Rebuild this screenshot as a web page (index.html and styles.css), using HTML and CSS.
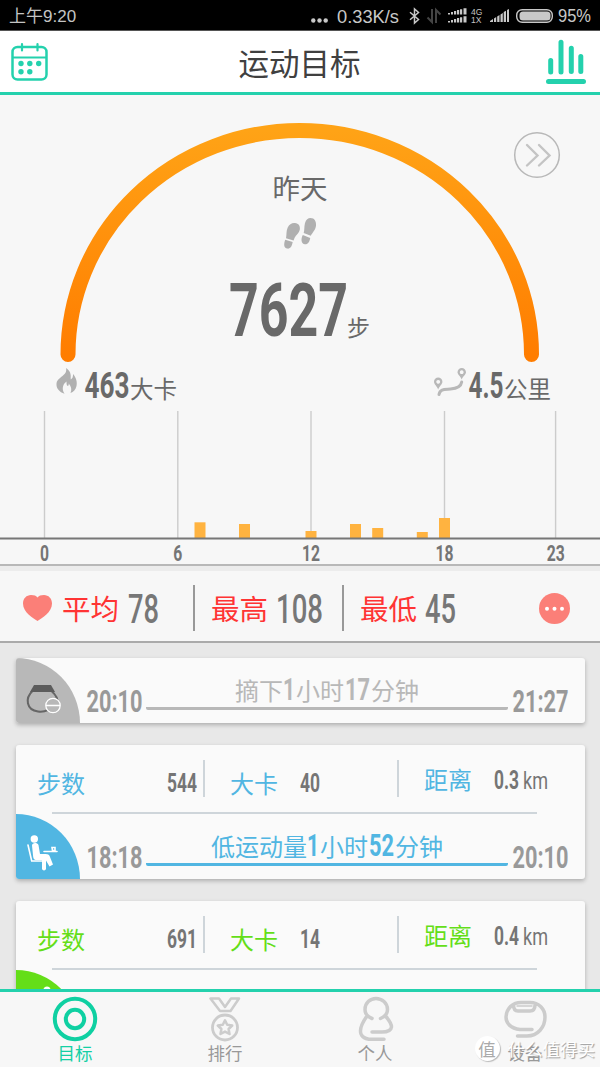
FILE: index.html
```html
<!DOCTYPE html>
<html lang="zh-CN">

<head>
    <meta charset="UTF-8">
    <meta name="viewport" content="width=device-width, initial-scale=1.0">
    <title>运动目标</title>
    <link rel="stylesheet" href="styles.css">
</head>

<body>
    <!-- Status bar -->
    <div class="status-bar">
        <span class="clock">上午9:20</span>
        <div class="status-right">
            <svg class="dots" width="17" height="5" viewBox="0 0 17 5"><circle cx="2.3" cy="2.5" r="2.2"/><circle cx="8.5" cy="2.5" r="2.2"/><circle cx="14.7" cy="2.5" r="2.2"/></svg>
            <svg class="speed" width="63" height="14"><text x="0" y="14" font-size="18.5" textLength="62" lengthAdjust="spacingAndGlyphs">0.33K/s</text></svg>
            <svg class="bluetooth" width="11" height="16" viewBox="0 0 11 16"><path d="M1 4.2L9.5 11.5L5.5 15V1L9.5 4.5L1 11.8"/></svg>
            <svg class="arrows" width="14" height="14" viewBox="0 0 14 14"><path d="M5 0V13L0.5 8.5M9 14V1L13.5 5.5"/></svg>
            <svg class="dual" width="19" height="15" viewBox="0 0 19 15"><path d="M0 5h2v1.500H0zM3 4h2v2.500H3zM6 3h2.200v3.500H6zM9 2h2.200v4.500H9zM12 1.200h2.200v5.300H12zM15.500 .3h3v6.200h-3zM0 13h2v1.500H0zM3 12h2v2.500H3zM6 11h2.200v3.500H6zM9 10h2.200v4.500H9zM12 9.200h2.200v5.300H12zM15.500 8.300h3v6.200h-3z"/></svg>
            <span class="net">4G<br>1X</span>
            <svg class="signal" width="19" height="13" viewBox="0 0 19 13"><path d="M0 12L3 10V13H0zM4 9.500L6.200 8V13H4zM7.200 7.500L9.500 6V13h-2.300zM10.500 5.500L12.800 4V13h-2.300zM13.700 3L16 1.800V13h-2.300zM17 1L19 0V13h-2z"/></svg>
            <svg class="battery" width="37" height="14" viewBox="0 0 37 14"><rect x=".7" y=".7" width="35.600" height="12.600" rx="5.500"/><rect class="level" x="3.500" y="2.500" width="31" height="9" rx="3.500"/></svg>
            <svg class="percent" width="33" height="13"><text x="0" y="13" font-size="17.500" textLength="33" lengthAdjust="spacingAndGlyphs">95%</text></svg>
        </div>
    </div>

    <!-- Title -->
    <header class="header">
        <svg class="calendar" width="38" height="40" viewBox="0 0 38 40">
            <rect x="2.500" y="5" width="34" height="32.500" rx="5"/>
            <path d="M3 15.500H36M12 2V8.500M27.500 2V8.500"/>
            <g class="day"><circle cx="11" cy="21.500" r="2.700"/><circle cx="19.800" cy="21.500" r="2.700"/><circle cx="28.700" cy="21.500" r="2.700"/><circle cx="11" cy="29.700" r="2.700"/><circle cx="19.800" cy="29.700" r="2.700"/></g>
        </svg>
        <h1>运动目标</h1>
        <svg class="stats-icon" width="40" height="46" viewBox="0 0 40 46"><path d="M4.700 21.500V33M15 3.200V33M25.300 9.200V32.500M34.800 17.500V32.500M2.500 42.500H37.500"/></svg>
    </header>

    <!-- Daily goal -->
    <section class="goal">
        <svg class="arc" width="600" height="275" viewBox="0 95 600 275">
            <defs>
                <linearGradient id="arcFill" x1="0" y1="0" x2="0" y2="1">
                    <stop offset="0" stop-color="#ffa316"/>
                    <stop offset="1" stop-color="#ff7d00"/>
                </linearGradient>
            </defs>
            <path d="M68 354.500A231.750 224 0 0 1 531.500 354.500" stroke="url(#arcFill)"/>
        </svg>
        <div class="today">
            <p class="day-name">昨天</p>
            <svg class="feet" width="36" height="34" viewBox="0 0 36 34">
                <path d="M13 6C16.500 6.300 18.500 9 17.800 12.800C17.200 16 14 18 12.600 20.800L11.600 23.400L4 21.200C4.800 17.500 4 14.500 5.700 10.500C7.300 7.200 10 5.600 13 6zM3.200 22.700L10.700 25C10 29 8.600 32 5.300 31.600C1.600 31 1.700 27 3.200 22.700z"/>
                <path d="M28.500 1C32.500 1 34.500 4.500 34 8.700C33.500 13 30.500 15.300 28.800 18.800L21.700 16C22.700 12.500 22 10 23 6C24 2.500 26 1 28.500 1zM20.800 18L28.200 21C27.500 25 26 27.500 23 27.300C19 27 18.700 22 20.800 18z"/>
            </svg>
            <div class="steps">
                <svg class="num" width="115" height="53"><text x="-1" y="53" font-size="74.500" textLength="119" lengthAdjust="spacingAndGlyphs">7627</text></svg>
                <span>步</span>
            </div>
        </div>
        <svg class="next" width="48" height="48" viewBox="0 0 48 48"><circle cx="24" cy="24" r="22.300"/><path d="M14 14L24.500 24.500L14 34.500M26 14L36.500 24.500L26 34.500"/></svg>
    </section>

    <div class="totals">
        <div class="total">
            <svg class="flame" width="22" height="27" viewBox="0 0 22 27"><path d="M10 0C16 4 14.500 8.500 14.800 11.500C16.500 10.500 17.200 8.700 17 6C20 9.500 21.500 14 20.500 18C19.700 21.500 17.500 24 14.500 25C16 21.500 15.300 18.500 12.700 15.500C13 18 11.500 18.500 10.800 17C10.500 15.800 10.500 14.800 10.500 13.500C7.500 15.500 5 20.500 8.500 25.800C3.500 24 0 20.500 .5 15.500C1 10.500 6 9.500 9 5.500C10.300 3.700 10.500 2 10 0z"/></svg>
            <svg class="num" width="44" height="26"><text x="-.5" y="26" font-size="36.600" textLength="45" lengthAdjust="spacingAndGlyphs">463</text></svg>
            <span>大卡</span>
        </div>
        <div class="total">
            <svg class="route" width="34" height="29" viewBox="0 0 34 29"><path class="pin" d="M5.200 21.500C4 18 1 16.500 1 13.800A4.200 4.200 0 0 1 9.400 13.800C9.400 16.500 6.400 18 5.200 21.500zM28.700 11.500C27.500 8 24.500 6.500 24.500 4.200A4.200 4.200 0 0 1 33 4.200C33 6.500 30 8 28.700 11.500zM5.200 11.900a1.900 1.900 0 1 0 .01 0zM28.700 2.300a1.900 1.900 0 1 0 .01 0z"/><path class="road" d="M6 26.500C7 20.500 12 21.500 17.500 21C24 20.500 28 18.500 28.700 14"/></svg>
            <svg class="num" width="34" height="26"><text x="-.5" y="26" font-size="36.600" textLength="35" lengthAdjust="spacingAndGlyphs">4.5</text></svg>
            <span>公里</span>
        </div>
    </div>

    <!-- Steps per hour -->
    <svg class="chart" width="600" height="154" viewBox="0 410 600 154">
        <path class="grid-line" d="M44.500 411V538M177.800 411V538M311 411V538M444.500 411V538M555.600 411V538"/>
        <g class="bars">
            <rect x="194.500" y="522.300" width="11" height="16"/>
            <rect x="239" y="524" width="11" height="14"/>
            <rect x="305.500" y="531" width="11" height="7"/>
            <rect x="350" y="524" width="11" height="14"/>
            <rect x="372.200" y="528" width="11" height="10"/>
            <rect x="416.800" y="532" width="11" height="6"/>
            <rect x="439" y="518" width="11" height="20"/>
        </g>
        <path class="axis" d="M0 538.500H600"/>
        <g class="hours">
            <text x="40" y="560.500" textLength="9" lengthAdjust="spacingAndGlyphs">0</text>
            <text x="173.300" y="560.500" textLength="9" lengthAdjust="spacingAndGlyphs">6</text>
            <text x="302" y="560.500" textLength="18" lengthAdjust="spacingAndGlyphs">12</text>
            <text x="435.500" y="560.500" textLength="18" lengthAdjust="spacingAndGlyphs">18</text>
            <text x="546.800" y="560.500" textLength="18" lengthAdjust="spacingAndGlyphs">23</text>
        </g>
    </svg>

    <!-- Heart rate -->
    <section class="heart-rate">
        <div class="rate">
            <svg class="heart" width="29" height="26" viewBox="0 0 29 26"><path d="M14.500 26C10 23 0 17.500 0 8.500C0 3.500 3.500 0 8 0C11 0 13.500 .8 14.500 2.500C15.500 .8 18 0 21 0C25.500 0 29 3.500 29 8.500C29 17.500 19 23 14.500 26z"/></svg>
            <span>平均</span>
            <svg class="num" width="30" height="29"><text x="-1" y="29" font-size="41" textLength="31" lengthAdjust="spacingAndGlyphs">78</text></svg>
        </div>
        <div class="rate">
            <span>最高</span>
            <svg class="num" width="45" height="29"><text x="-2" y="29" font-size="41" textLength="47" lengthAdjust="spacingAndGlyphs">108</text></svg>
        </div>
        <div class="rate">
            <span>最低</span>
            <svg class="num" width="30" height="29"><text x="-2" y="29" font-size="41" textLength="31" lengthAdjust="spacingAndGlyphs">45</text></svg>
        </div>
        <svg class="more" width="31" height="31" viewBox="0 0 31 31"><circle cx="15.500" cy="15.500" r="15.500"/><g fill="#fff"><circle cx="8" cy="15.700" r="2"/><circle cx="15.500" cy="15.700" r="2"/><circle cx="23" cy="15.700" r="2"/></g></svg>
    </section>

    <!-- Timeline -->
    <main class="timeline">
        <article class="card off">
            <div class="period">
                <div class="corner">
                    <svg width="36" height="30" viewBox="0 0 36 30">
                        <path d="M6.500 7C-1 14 0 26 12 27.500C16 28 19 27.500 22 26M25.500 7C30 11 32 15 31.500 19" fill="none" stroke="#666" stroke-width="2"/>
                        <path d="M8 1H25L29 8H4z" fill="#5c5c5c"/>
                        <circle cx="27" cy="21.500" r="7.200" fill="#b8b8b8" stroke="#fff" stroke-width="1.300"/>
                        <path d="M20 21.500H34" stroke="#fff" stroke-width="1.300"/>
                    </svg>
                </div>
                <svg class="num time" width="55" height="22"><text x="-.5" y="22" font-size="31" textLength="56" lengthAdjust="spacingAndGlyphs">20:10</text></svg>
                <div class="activity">
                    <span>摘下</span>
                    <svg class="num" width="11" height="22"><text x="-1" y="22" font-size="31.500" textLength="12" lengthAdjust="spacingAndGlyphs">1</text></svg>
                    <span>小时</span>
                    <svg class="num" width="25" height="22"><text x="0" y="22" font-size="31.500" textLength="25" lengthAdjust="spacingAndGlyphs">17</text></svg>
                    <span>分钟</span>
                </div>
                <svg class="num time" width="55" height="22"><text x="-.5" y="22" font-size="31" textLength="56" lengthAdjust="spacingAndGlyphs">21:27</text></svg>
            </div>
        </article>

        <article class="card low">
            <div class="summary">
                <div class="item">
                    <span>步数</span>
                    <svg class="num" width="30" height="18"><text x="0" y="18" font-size="25" textLength="30" lengthAdjust="spacingAndGlyphs">544</text></svg>
                </div>
                <div class="item">
                    <span>大卡</span>
                    <svg class="num" width="20" height="18"><text x="0" y="18" font-size="25" textLength="20" lengthAdjust="spacingAndGlyphs">40</text></svg>
                </div>
                <div class="item distance">
                    <span>距离</span>
                    <svg class="num" width="54" height="18"><text x="0" y="18" font-size="25" textLength="25" lengthAdjust="spacingAndGlyphs">0.3</text><text class="unit" x="29" y="18" font-size="24" textLength="25" lengthAdjust="spacingAndGlyphs">km</text></svg>
                </div>
            </div>
            <div class="period">
                <div class="corner">
                    <svg width="32" height="36" viewBox="0 0 32 36">
                        <circle cx="8.300" cy="4" r="3.700" fill="#fff"/>
                        <path d="M6 10.500C6 7.500 11 7 12.500 10L14 19H19.500C22.500 19 23.500 20 24 22L27 29.500L23.500 31.500L20 25.500V33.500C20 36 16 36 16 33.500V25H9.500C8 24.500 7.500 23.500 7.200 22z" fill="#fff"/>
                        <path d="M2 10L5.700 26H16M18 16.500H31M26 12.500H29V15.500H26.500z" fill="none" stroke="#fff" stroke-width="1.600" stroke-linecap="round"/>
                    </svg>
                </div>
                <svg class="num time" width="55" height="22"><text x="-.5" y="22" font-size="31" textLength="56" lengthAdjust="spacingAndGlyphs">18:18</text></svg>
                <div class="activity">
                    <span>低运动量</span>
                    <svg class="num" width="11" height="22"><text x="-1" y="22" font-size="31.500" textLength="12" lengthAdjust="spacingAndGlyphs">1</text></svg>
                    <span>小时</span>
                    <svg class="num" width="25" height="22"><text x="0" y="22" font-size="31.500" textLength="25" lengthAdjust="spacingAndGlyphs">52</text></svg>
                    <span>分钟</span>
                </div>
                <svg class="num time" width="55" height="22"><text x="-.5" y="22" font-size="31" textLength="56" lengthAdjust="spacingAndGlyphs">20:10</text></svg>
            </div>
        </article>

        <article class="card walk">
            <div class="summary">
                <div class="item">
                    <span>步数</span>
                    <svg class="num" width="30" height="18"><text x="0" y="18" font-size="25" textLength="30" lengthAdjust="spacingAndGlyphs">691</text></svg>
                </div>
                <div class="item">
                    <span>大卡</span>
                    <svg class="num" width="20" height="18"><text x="0" y="18" font-size="25" textLength="20" lengthAdjust="spacingAndGlyphs">14</text></svg>
                </div>
                <div class="item distance">
                    <span>距离</span>
                    <svg class="num" width="54" height="18"><text x="0" y="18" font-size="25" textLength="25" lengthAdjust="spacingAndGlyphs">0.4</text><text class="unit" x="29" y="18" font-size="24" textLength="25" lengthAdjust="spacingAndGlyphs">km</text></svg>
                </div>
            </div>
            <div class="period">
                <div class="corner">
                    <svg width="32" height="40" viewBox="0 0 32 40"><circle cx="21" cy="4" r="3.500" fill="#fff"/></svg>
                </div>
            </div>
        </article>
    </main>

    <!-- Tabs -->
    <nav class="tabs">
        <a class="tab active">
            <svg width="48" height="48" viewBox="0 0 48 48"><circle cx="24" cy="24" r="20.200"/><circle cx="24" cy="24" r="9.200"/></svg>
            <span>目标</span>
        </a>
        <a class="tab">
            <svg width="48" height="48" viewBox="0 0 48 48"><path d="M9.500 3.500H18L24 12L30 3.500H38L29.500 16H19zM24 25.300L26.200 29.800L31.200 30.500L27.600 34L28.500 39L24 36.600L19.500 39L20.400 34L16.800 30.500L21.800 29.800z" stroke-width="2.500"/><circle cx="24" cy="32.500" r="12.500" stroke-width="2.800"/></svg>
            <span>排行</span>
        </a>
        <a class="tab">
            <svg width="48" height="48" viewBox="0 0 48 48"><path d="M21 23.500C17 22 14 19 14 14.500C14 8 19 3.500 25 3.500C31 3.500 36.500 8 36.500 14.500C36.500 19 33 22 29.500 23.500M16 21C11 28 8.500 35 10 39C12 44 17 44.300 22 44.300H33M34.500 21C38 25 40.500 29 40.500 32C40 36 35 37 31 37H21"/></svg>
            <span>个人</span>
        </a>
        <a class="tab">
            <svg width="48" height="48" viewBox="0 0 48 48"><path d="M31 34.500H19C9.500 33.500 5 28 5 22C5.500 13 12 7.500 20 7.500H29C38 7.500 44 14 44 22C44 32 37 41 26 41H16.500M12.500 10C12.500 14 14 16 17 16H29C32.500 16 34 14 34 10"/><path d="M16 11H31" stroke-width="1.500"/></svg>
            <span>设备</span>
        </a>
    </nav>

    <div class="watermark"><i>值</i><b>什么值得买</b></div>
</body>

</html>
```
FILE: styles.css
```css
* {
    box-sizing: border-box;
}

body {
    font-family: "Noto Sans CJK SC", sans-serif;
    display: flex;
    flex-direction: column;
    width: 600px;
    height: 1067px;
    margin: 0;
    overflow: hidden;
    position: relative;
    background-color: #f7f7f7;
    color: #696969;
}

svg {
    display: block;
    flex: none;
    overflow: visible;
}

h1,
p {
    margin: 0;
    font-weight: normal;
}

.num {
    fill: currentColor;
    font-family: Roboto, sans-serif;
    font-weight: bold;
}

/* status bar */
.status-bar {
    flex: none;
    display: flex;
    align-items: center;
    justify-content: space-between;
    height: 31px;
    padding: 1px 9px 0;
    background-color: #000;
    border-bottom: 1px solid #555;
    color: #c4c4c4;
    font-family: "Liberation Sans", "Noto Sans CJK SC", sans-serif;
}

.clock {
    font-size: 17px;
    line-height: 30px;
    padding-top: 2px;
}

.status-right {
    display: flex;
    align-items: center;
    fill: #c8c8c8;
}

.dots {
    margin: 9px 9px 0 0;
}

.speed {
    margin-right: 9px;
}

.bluetooth {
    margin-right: 7px;
    fill: none;
    stroke: #c8c8c8;
    stroke-width: 1.5;
}

.arrows {
    margin-right: 7px;
    fill: none;
    stroke: #444;
    stroke-width: 2;
}

.dual {
    margin-right: 4px;
}

.net {
    width: 11px;
    margin-right: 8px;
    font-size: 8.5px;
    line-height: 8px;
}

.signal {
    margin-right: 7px;
}

.battery {
    margin-right: 5px;
    fill: none;
    stroke: #c8c8c8;
    stroke-width: 1.4;
}

.battery .level {
    fill: #c8c8c8;
    stroke: none;
}

/* header */
.header {
    flex: none;
    display: flex;
    align-items: center;
    justify-content: space-between;
    height: 64px;
    padding: 0 14px 0 10px;
    background-color: #fff;
    border-bottom: 3px solid #24d1ad;
}

.header h1 {
    font-size: 30.5px;
    line-height: 60px;
    padding: 1px 0 0 5px;
    color: #404040;
}

.calendar,
.stats-icon {
    fill: none;
    stroke: #24d1ad;
    stroke-width: 2.5;
    stroke-linecap: round;
}

.calendar path {
    stroke-width: 2.2;
}

.day {
    fill: #24d1ad;
    stroke: none;
}

.stats-icon {
    stroke-width: 5;
}

/* goal */
.goal {
    flex: none;
    display: grid;
    height: 272px;
}

.goal > * {
    grid-area: 1 / 1;
}

.arc path {
    fill: none;
    stroke-width: 15;
    stroke-linecap: round;
}

.today {
    display: flex;
    flex-direction: column;
    align-items: center;
    padding-top: 72px;
}

.day-name {
    font-size: 27.5px;
    line-height: 40px;
}

.feet {
    margin-top: 10px;
    fill: #b0b0b0;
}

.steps {
    display: flex;
    align-items: baseline;
    margin-top: 32px;
}

.steps span {
    margin-left: 2px;
    font-size: 23px;
    line-height: 30px;
}

.next {
    justify-self: end;
    margin: 36px 39px 0 0;
    fill: none;
    stroke: #b8b8b8;
    stroke-width: 1.5;
}

.next path {
    stroke-width: 2.4;
    stroke: #c4c4c4;
    stroke-linecap: round;
}

.totals {
    flex: none;
    display: flex;
    justify-content: space-between;
    height: 43px;
    padding: 0 49px 0 56px;
}

.total {
    display: flex;
    align-items: baseline;
    font-size: 23.5px;
    line-height: 43px;
}

.flame {
    align-self: flex-start;
    margin: 1px 7px 0 0;
    fill: #b0b0b0;
}

.route {
    align-self: flex-start;
    margin: 1px 2px 0 0;
}

.pin {
    fill: #b8b8b8;
    fill-rule: evenodd;
}

.road {
    fill: none;
    stroke: #b8b8b8;
    stroke-width: 3;
    stroke-linecap: round;
}

.total span {
    margin-left: 1px;
}

/* chart */
.chart {
    font-family: Roboto, sans-serif;
}

.grid-line {
    stroke: #ccc;
    stroke-width: 1.4;
}

.bars {
    fill: #ffb340;
}

.axis {
    stroke: #777;
    stroke-width: 2;
}

.hours {
    fill: #757575;
    font-size: 21.5px;
    font-weight: bold;
}

/* heart rate */
.heart-rate {
    flex: none;
    display: flex;
    align-items: center;
    height: 79px;
    padding: 9px 0 0 23px;
    border-top: 2px solid #b8b8b8;
    border-bottom: 2px solid #aaa;
    box-shadow: inset 0 5px #ececec;
}

.rate {
    display: flex;
    align-items: center;
    height: 46px;
    font-size: 28.5px;
    line-height: 46px;
    color: #ff3434;
}

.rate + .rate {
    border-left: 2px solid #999;
    padding-left: 16px;
}

.rate:nth-child(1) {
    width: 170px;
}

.rate:nth-child(2) {
    width: 149px;
}

.rate:nth-child(3) {
    width: 197px;
}

.rate .num {
    margin-left: 10px;
    color: #777;
    font-weight: 500;
}

.heart {
    margin-right: 10px;
}

.heart,
.more {
    fill: #fb7f78;
}

/* timeline */
.timeline {
    flex: 1;
    min-height: 0;
    overflow: hidden;
    display: flex;
    flex-direction: column;
    gap: 22px;
    padding: 15px 15px 0 16px;
    background-color: #e8e8e8;
}

.card {
    flex: none;
    border-radius: 3px;
    background-color: #fafafa;
    box-shadow: 0 2px 4px rgba(0, 0, 0, 0.25);
    overflow: hidden;
}

.off {
    color: #b8b8b8;
}

.low {
    color: #51b6e2;
}

.walk {
    color: #64de18;
}

.summary {
    display: flex;
    height: 69px;
    margin: 0 48px 0 21px;
    position: relative;
}

.summary::after {
    content: "";
    position: absolute;
    left: 15px;
    right: 0;
    bottom: 0;
    height: 2px;
    background-color: #ced5da;
}

.item {
    flex: none;
    display: flex;
    align-items: center;
    height: 37px;
    margin-top: 15px;
    font-size: 24px;
    line-height: 37px;
    white-space: nowrap;
}

.item span {
    margin-top: 8px;
}

.item .num {
    margin: 9px 0 0 22px;
    color: #757575;
}

.item .unit {
    font-weight: normal;
}

.item:first-child {
    width: 166px;
    justify-content: space-between;
    padding-right: 6px;
}

.item + .item {
    border-left: 2px solid #ced5da;
    padding-left: 25px;
}

.item:nth-child(2) {
    width: 194px;
}

.item.distance span {
    margin-top: -1px;
}

.item.distance .num {
    margin-top: 2px;
}

.period {
    display: flex;
    align-items: flex-end;
    height: 65px;
}

.corner {
    flex: none;
    width: 64px;
    height: 65px;
    padding: 21px 0 0 10px;
    margin-right: 7px;
    border-top-right-radius: 64px 65px;
    background-color: currentColor;
}

.off .corner {
    padding-top: 26px;
}

.walk .corner {
    padding-top: 16px;
}

.time {
    margin-bottom: 11px;
    color: #999;
}

.activity {
    flex: none;
    display: flex;
    align-items: baseline;
    justify-content: center;
    width: 362px;
    height: 42px;
    margin: 0 5px 13px 4px;
    border-bottom: 3px solid currentColor;
    border-radius: 2px;
    font-size: 24px;
    line-height: 44px;
}

.activity .num {
    margin: 0 1px;
}

/* tabs */
.tabs {
    flex: none;
    display: flex;
    height: 78px;
    border-top: 3px solid #24d1ad;
}

.tab {
    width: 150px;
    display: flex;
    flex-direction: column;
    align-items: center;
    padding-top: 3px;
    color: #999;
    font-size: 17.5px;
    line-height: 20px;
}

.tab svg {
    fill: none;
    stroke: #ccc;
    stroke-width: 3.5;
    stroke-linecap: round;
    stroke-linejoin: round;
}

.tab.active {
    color: #14cfa5;
}

.tab.active svg {
    stroke: #0fd0a2;
    stroke-width: 4;
}

/* watermark over the last tab */
.watermark {
    position: absolute;
    right: 5px;
    bottom: 6px;
    display: flex;
    align-items: center;
    gap: 8px;
    color: #fff;
    font-size: 17.5px;
    line-height: 25px;
}

.watermark i {
    width: 25px;
    height: 25px;
    border-radius: 50%;
    background-color: #fff;
    box-shadow: 1px 1px 1px #bbb;
    color: #aaa;
    font-style: normal;
    text-align: center;
}

.watermark b {
    font-weight: normal;
    text-shadow: 1px 1px 1px #999;
}
```
